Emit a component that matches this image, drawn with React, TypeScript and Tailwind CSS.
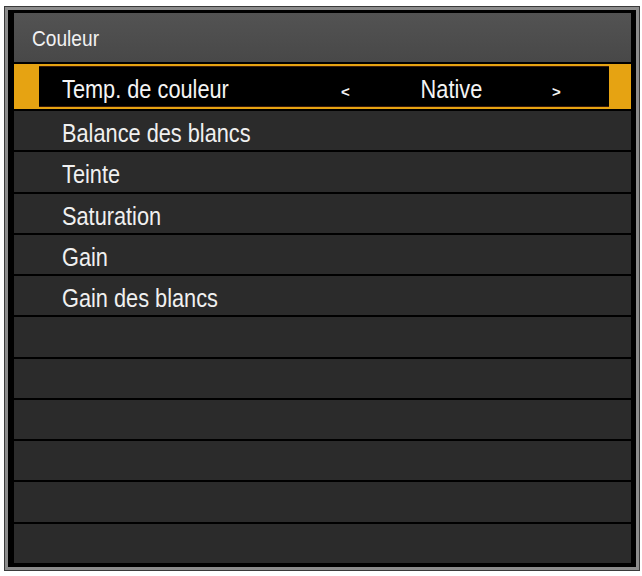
const items = ["Balance des blancs", "Teinte", "Saturation", "Gain", "Gain des blancs", "", "", "", "", "", ""];

const font = { fontFamily: '"Liberation Sans", Arial, sans-serif' };

export default function App() {
  return (
    <div className="h-[576px] w-[642px] bg-white pl-[4px] pt-[6px]" style={font}>
      <div className="h-[565px] w-[636px] border border-[#3a3a3a] bg-[#8c8c8c] p-[3px]">
        <div className="flex h-full w-full flex-col bg-black pb-[4px] pl-[6px] pr-[5px] pt-[3px]">
          <div className="flex h-[49px] items-center bg-gradient-to-b from-[#535353] to-[#484848] pl-[18px] pt-[2px]">
            <span className="inline-block origin-left scale-x-[0.87] text-[22px] leading-none text-[#f2f2f2]">Couleur</span>
          </div>

          <div className="flex h-[47px] border-t-2 border-black bg-[#e6a312]">
            <div className="w-[25px]" />
            <div className="my-[2px] flex flex-1 items-center border-y border-[#3a1a08] bg-black pl-[23px] pt-[8px] text-[#f4f4f4]">
              <div className="w-[279px]">
                <span className="inline-block origin-left scale-x-[0.87] text-[25px] leading-none">Temp. de couleur</span>
              </div>
              <span className="w-[10px] pt-[2px] text-[15px] font-bold leading-none">&lt;</span>
              <div className="w-[201px] text-center">
                <span className="inline-block scale-x-[0.87] text-[25px] leading-none">Native</span>
              </div>
              <span className="w-[10px] pt-[2px] text-[15px] font-bold leading-none">&gt;</span>
            </div>
            <div className="w-[22px]" />
          </div>

          {items.map((label, i) => (
            <div key={i} className="flex min-h-0 flex-1 items-center border-t-2 border-black bg-[#2b2b2b] pl-[48px] pt-[6px]">
              <span className="inline-block origin-left scale-x-[0.87] text-[25px] leading-none text-[#f0f0f0]">{label}</span>
            </div>
          ))}
        </div>
      </div>
    </div>
  );
}
